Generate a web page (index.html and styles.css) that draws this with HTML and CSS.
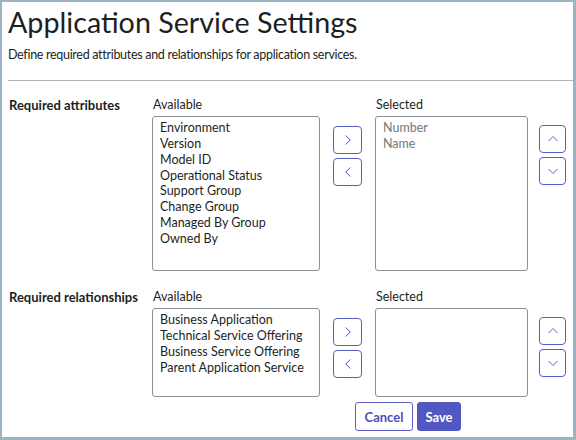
FILE: index.html
```html
<!DOCTYPE html>
<html>
<head>
<meta charset="utf-8">
<link rel="stylesheet" href="styles.css">
</head>
<body>
<div class="frame">
  <h1 class="title">Application Service Settings</h1>
  <p class="desc">Define required attributes and relationships for application services.</p>
  <hr class="rule">
  <div class="section">
    <div class="sec-label">Required attributes</div>
    <div class="col">
      <div class="col-head">Available</div>
      <div class="listbox tall">
        <div>Environment</div>
        <div>Version</div>
        <div>Model ID</div>
        <div>Operational Status</div>
        <div>Support Group</div>
        <div>Change Group</div>
        <div>Managed By Group</div>
        <div>Owned By</div>
      </div>
    </div>
    <div class="btns move">
      <button class="icon-btn"><svg width="10" height="12" viewBox="0 0 10 12"><path d="M2.5 1.5 L7.5 6 L2.5 10.5" fill="none" stroke="#5a5fc8" stroke-width="1"/></svg></button>
      <button class="icon-btn"><svg width="10" height="12" viewBox="0 0 10 12"><path d="M7.5 1.5 L2.5 6 L7.5 10.5" fill="none" stroke="#5a5fc8" stroke-width="1"/></svg></button>
    </div>
    <div class="col sel">
      <div class="col-head">Selected</div>
      <div class="listbox tall muted">
        <div>Number</div>
        <div>Name</div>
      </div>
    </div>
    <div class="btns order">
      <button class="icon-btn narrow"><svg width="12" height="10" viewBox="0 0 12 10"><path d="M1.5 7 L6 2.5 L10.5 7" fill="none" stroke="#5a5fc8" stroke-width="1"/></svg></button>
      <button class="icon-btn narrow"><svg width="12" height="10" viewBox="0 0 12 10"><path d="M1.5 3 L6 7.5 L10.5 3" fill="none" stroke="#5a5fc8" stroke-width="1"/></svg></button>
    </div>
  </div>
  <div class="section second">
    <div class="sec-label">Required relationships</div>
    <div class="col">
      <div class="col-head">Available</div>
      <div class="listbox short">
        <div>Business Application</div>
        <div>Technical Service Offering</div>
        <div>Business Service Offering</div>
        <div>Parent Application Service</div>
      </div>
    </div>
    <div class="btns move">
      <button class="icon-btn"><svg width="10" height="12" viewBox="0 0 10 12"><path d="M2.5 1.5 L7.5 6 L2.5 10.5" fill="none" stroke="#5a5fc8" stroke-width="1"/></svg></button>
      <button class="icon-btn"><svg width="10" height="12" viewBox="0 0 10 12"><path d="M7.5 1.5 L2.5 6 L7.5 10.5" fill="none" stroke="#5a5fc8" stroke-width="1"/></svg></button>
    </div>
    <div class="col sel">
      <div class="col-head">Selected</div>
      <div class="listbox short"></div>
    </div>
    <div class="btns order">
      <button class="icon-btn narrow"><svg width="12" height="10" viewBox="0 0 12 10"><path d="M1.5 7 L6 2.5 L10.5 7" fill="none" stroke="#5a5fc8" stroke-width="1"/></svg></button>
      <button class="icon-btn narrow"><svg width="12" height="10" viewBox="0 0 12 10"><path d="M1.5 3 L6 7.5 L10.5 3" fill="none" stroke="#5a5fc8" stroke-width="1"/></svg></button>
    </div>
  </div>
  <div class="actions">
    <button class="btn cancel">Cancel</button>
    <button class="btn save">Save</button>
  </div>
</div>
</body>
</html>
```

FILE: styles.css
```css
* { box-sizing: border-box; }
html, body { margin: 0; padding: 0; background: #ffffff; }
body { font-family: Lato, "Open Sans", sans-serif; color: #1d1f22; }
.frame {
  width: 576px;
  height: 440px;
  border-style: solid;
  border-color: #9db3c2;
  border-width: 2px 3px 3px 2px;
  padding: 0 0 0 6px;
  overflow: hidden;
}
.title {
  font-size: 28.7px;
  font-weight: 400;
  line-height: 36px;
  margin: 2px 0 0 0;
  letter-spacing: 0;
}
.desc {
  font-size: 12.5px;
  letter-spacing: -0.3px;
  line-height: 16px;
  margin: 7px 0 0 0;
}
.rule {
  border: 0;
  border-top: 1px solid #aeb2b8;
  margin: 17px 0 0 0;
  height: 0;
}
.section {
  display: grid;
  grid-template-columns: 131px 168px 29px 153px 27px;
  column-gap: 13px;
  margin-top: 16px;
  align-items: start;
}
.section .btns.order { margin-left: -2px; }
.second { margin-top: 18px; }
.sec-label {
  font-size: 13px;
  font-weight: 700;
  line-height: 16px;
  padding-left: 1px;
}
.col-head {
  font-size: 12.5px;
  line-height: 16px;
  margin-bottom: 3px;
  padding-left: 1px;
}
.listbox {
  border: 1px solid #8b9099;
  border-radius: 3px;
  padding: 3px 7px 0 7px;
  font-size: 12.5px;
  line-height: 15.85px;
  color: #1d1f22;
}
.listbox.tall { height: 155px; }
.listbox.short { height: 89px; }
.listbox.muted { color: #74777c; }
.btns {
  display: flex;
  flex-direction: column;
  gap: 4px;
}
.move { margin-top: 29px; }
.order { margin-top: 28px; }
.icon-btn {
  width: 29px;
  height: 28px;
  padding: 0;
  border: 1px solid #5a5fc8;
  border-radius: 4px;
  background: #ffffff;
  display: flex;
  align-items: center;
  justify-content: center;
}
.icon-btn.narrow { width: 27px; }
.actions {
  display: flex;
  gap: 4px;
  margin: 5px 0 0 347px;
}
.btn {
  height: 29px;
  border-radius: 3px;
  font-family: Lato, "Open Sans", sans-serif;
  font-size: 13px;
  font-weight: 700;
  padding: 0;
  border: 1px solid #5a5fc8;
}
.cancel { width: 58px; background: #ffffff; color: #4a4fb5; }
.save { width: 44px; background: #5257c1; color: #ffffff; border-color: #5257c1; }
```
